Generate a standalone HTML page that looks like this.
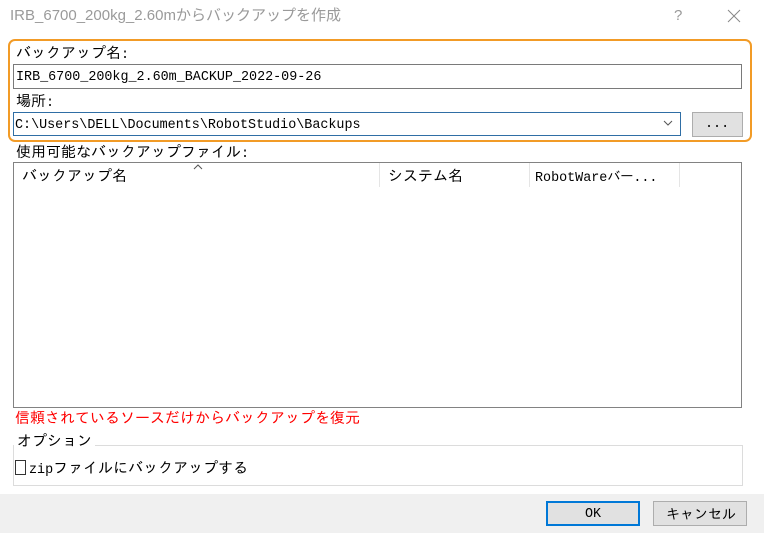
<!DOCTYPE html><html><head><meta charset="utf-8"><style>
body{margin:0;width:764px;height:533px;background:#fff;position:relative;overflow:hidden;font-family:"Liberation Mono","IPAGothic","Noto Sans CJK JP",monospace;font-size:13.4px;color:#000}
div{position:absolute;box-sizing:border-box}
.t{white-space:nowrap;line-height:16px}
.j{font-family:"IPAGothic","Noto Sans CJK JP",monospace;font-size:15px}
</style></head><body>
<div class="t" style="left:10px;top:7px;font-family:'Liberation Sans','Noto Sans CJK JP',sans-serif;font-size:15px;color:#9a9a9a;line-height:18px">IRB_6700_200kg_2.60mからバックアップを作成</div>
<div class="t" style="left:674px;top:8px;font-family:'Liberation Sans',sans-serif;font-size:15px;color:#999">?</div>
<svg style="position:absolute;left:727px;top:9px" width="14" height="14"><path d="M1 1L13 13M13 1L1 13" stroke="#888" stroke-width="1"/></svg>
<div style="left:8px;top:39px;width:744px;height:103px;border:2px solid #f29b26;border-radius:7px"></div>
<div class="t" style="left:16px;top:45px"><span class="j">バックアップ名</span>:</div>
<div style="left:13px;top:64px;width:729px;height:25px;border:1px solid #7a7a7a"></div>
<div class="t" style="left:16px;top:70px">IRB_6700_200kg_2.60m_BACKUP_2022-09-26</div>
<div class="t" style="left:16px;top:93px"><span class="j">場所</span>:</div>
<div style="left:13px;top:112px;width:668px;height:24px;border:1px solid #2f6ea5"></div>
<div class="t" style="left:15px;top:118px">C:\Users\DELL\Documents\RobotStudio\Backups</div>
<svg style="position:absolute;left:663px;top:119px" width="10" height="8"><path d="M1 2L5 6L9 2" stroke="#555" fill="none"/></svg>
<div style="left:692px;top:112px;width:51px;height:25px;border:1px solid #adadad;background:#e1e1e1"></div>
<div class="t" style="left:705px;top:117px">...</div>
<div class="t" style="left:16px;top:144px"><span class="j">使用可能なバックアップファイル</span>:</div>
<div style="left:13px;top:162px;width:729px;height:246px;border:1px solid #828282"></div>
<div class="t j" style="left:22px;top:168px">バックアップ名</div>
<svg style="position:absolute;left:193px;top:164px" width="10" height="6"><path d="M1 5L5 1L9 5" stroke="#555" fill="none"/></svg>
<div style="left:379px;top:163px;width:1px;height:24px;background:#e5e5e5"></div>
<div class="t j" style="left:388px;top:168px">システム名</div>
<div style="left:529px;top:163px;width:1px;height:24px;background:#e5e5e5"></div>
<div class="t" style="left:535px;top:169px">RobotWare<span class="j" style="font-size:13px">バ一</span>...</div>
<div style="left:679px;top:163px;width:1px;height:24px;background:#e5e5e5"></div>
<div class="t j" style="left:15px;top:410px;color:#f00">信頼されているソースだけからバックアップを復元</div>
<div style="left:13px;top:445px;width:730px;height:41px;border:1px solid #dcdcdc"></div>
<div class="t j" style="left:14px;top:433px;background:#fff;padding:0 3px">オプション</div>
<div style="left:15px;top:460px;width:11px;height:15px;border:1px solid #333"></div>
<div class="t" style="left:29px;top:460px">zip<span class="j">ファイルにバックアップする</span></div>
<div style="left:0;top:494px;width:764px;height:39px;background:#f0f0f0"></div>
<div style="left:546px;top:501px;width:94px;height:25px;border:2px solid #0078d7;background:#e1e1e1"></div>
<div class="t" style="left:585px;top:507px">OK</div>
<div style="left:653px;top:501px;width:94px;height:25px;border:1px solid #adadad;background:#e1e1e1"></div>
<div class="t j" style="left:666px;top:506px;font-size:14px">キャンセル</div>
</body></html>
